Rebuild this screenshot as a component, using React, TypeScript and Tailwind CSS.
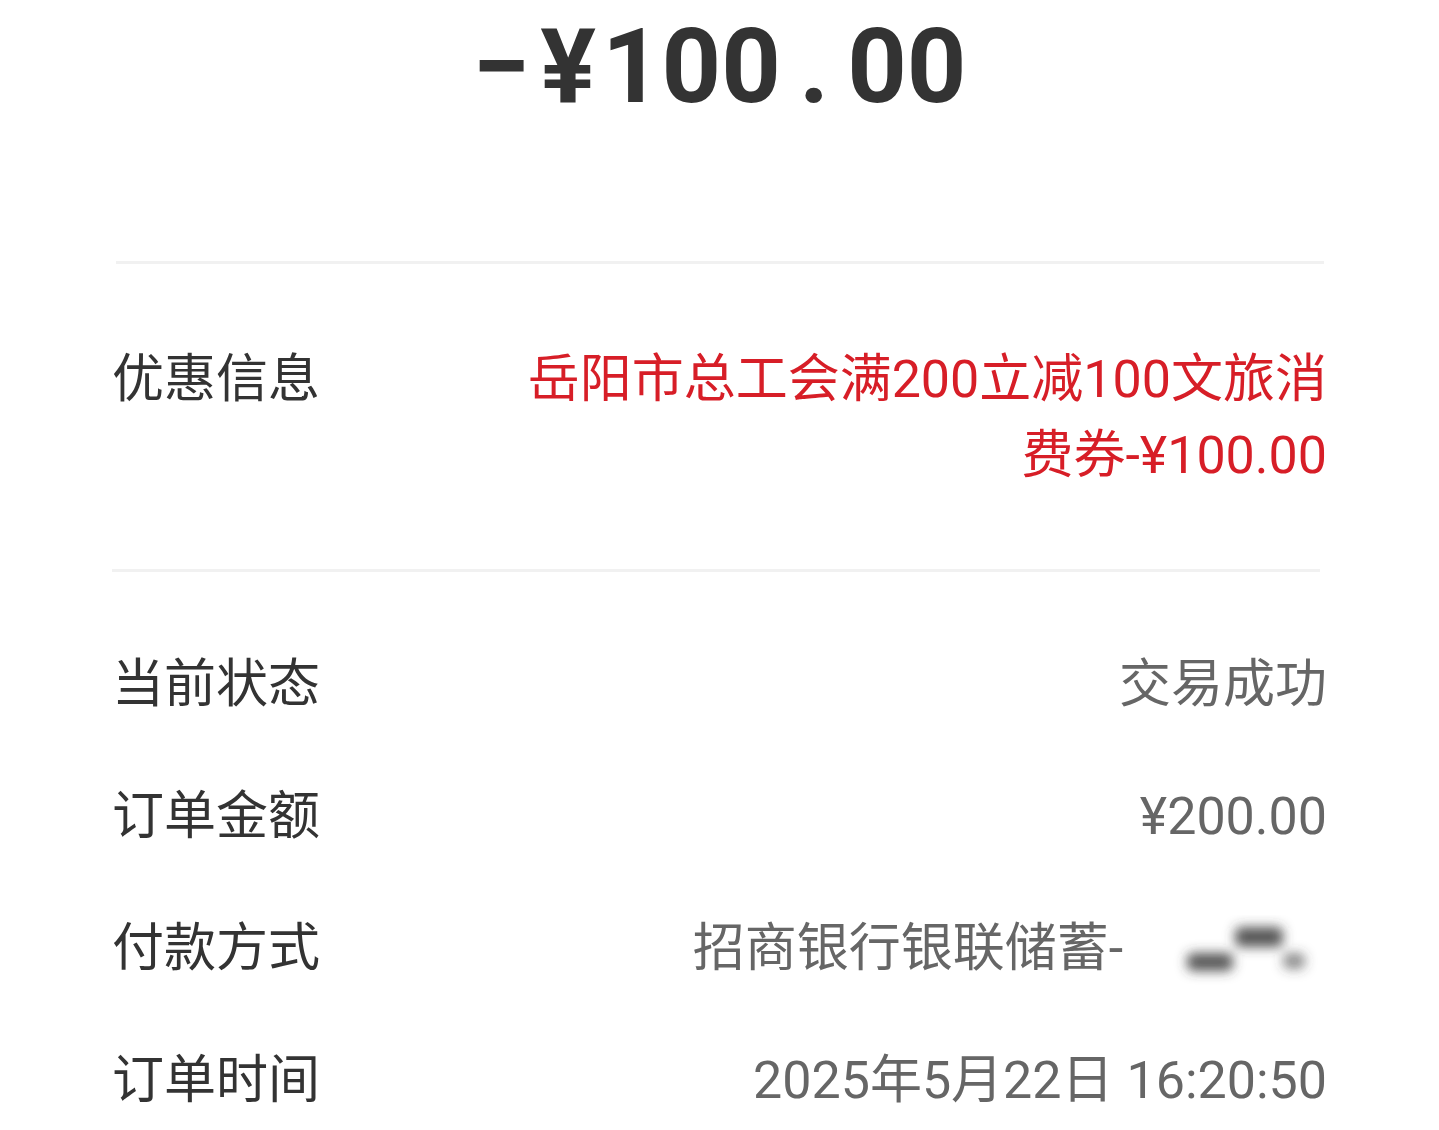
import React from 'react';

const FONT = "font-['Roboto','Noto_Sans_CJK_SC',sans-serif]";

const rows: { label: string; value: React.ReactNode }[] = [
  { label: '当前状态', value: '交易成功' },
  { label: '订单金额', value: '¥200.00' },
  {
    label: '付款方式',
    value: (
      <span className="flex items-center">
        <span>招商银行银联储蓄-</span>
        <MaskedCard />
      </span>
    ),
  },
  { label: '订单时间', value: '2025年5月22日 16:20:50' },
];

function MaskedCard() {
  // card number is smudged in the screenshot
  return (
    <svg width="160" height="76" viewBox="0 0 160 76" className="ml-[42px] mr-[2px] translate-y-[4px]">
      <defs>
        <filter id="smudge" x="-50%" y="-50%" width="200%" height="200%">
          <feGaussianBlur stdDeviation="6" />
        </filter>
      </defs>
      <g filter="url(#smudge)" fill="#3a3a3a">
        <rect x="22" y="38" width="46" height="18" rx="6" opacity="0.85" />
        <rect x="70" y="12" width="48" height="20" rx="6" opacity="0.85" />
        <rect x="118" y="38" width="22" height="16" rx="6" opacity="0.6" />
      </g>
    </svg>
  );
}

export default function App() {
  return (
    <div className={`min-h-[1130px] w-[1439px] bg-white ${FONT}`}>
      <div className="flex justify-center pt-[15px]">
        <div className="font-['Roboto',sans-serif] font-bold text-[104px] leading-[104px] text-[#333333] flex items-baseline">
          <span className="mr-[10px]">−</span>
          <span className="mr-[6px]">¥</span>
          <span>100</span>
          <span className="mx-[18px]">.</span>
          <span>00</span>
        </div>
      </div>

      <div className="px-[112px]">
        <div className="mt-[142px] h-[3px] bg-[#f1f1f1] ml-[4px] mr-[3px]" />

        <div className="flex justify-between pt-[78px] text-[52px] leading-[76px]">
          <span className="text-[#333333] shrink-0">优惠信息</span>
          <span className="text-right text-[#d71e27]">
            岳阳市总工会满200立减100文旅消
            <br />
            费券-¥100.00
          </span>
        </div>

        <div className="mt-[75px] h-[3px] bg-[#f1f1f1] mr-[7px]" />

        <div className="flex flex-col gap-[56px] pt-[75px] text-[52px] leading-[76px]">
          {rows.map((r) => (
            <div key={r.label} className="flex items-center justify-between">
              <span className="text-[#333333] shrink-0">{r.label}</span>
              <span className="text-[#666666] text-right">{r.value}</span>
            </div>
          ))}
        </div>
      </div>
    </div>
  );
}
